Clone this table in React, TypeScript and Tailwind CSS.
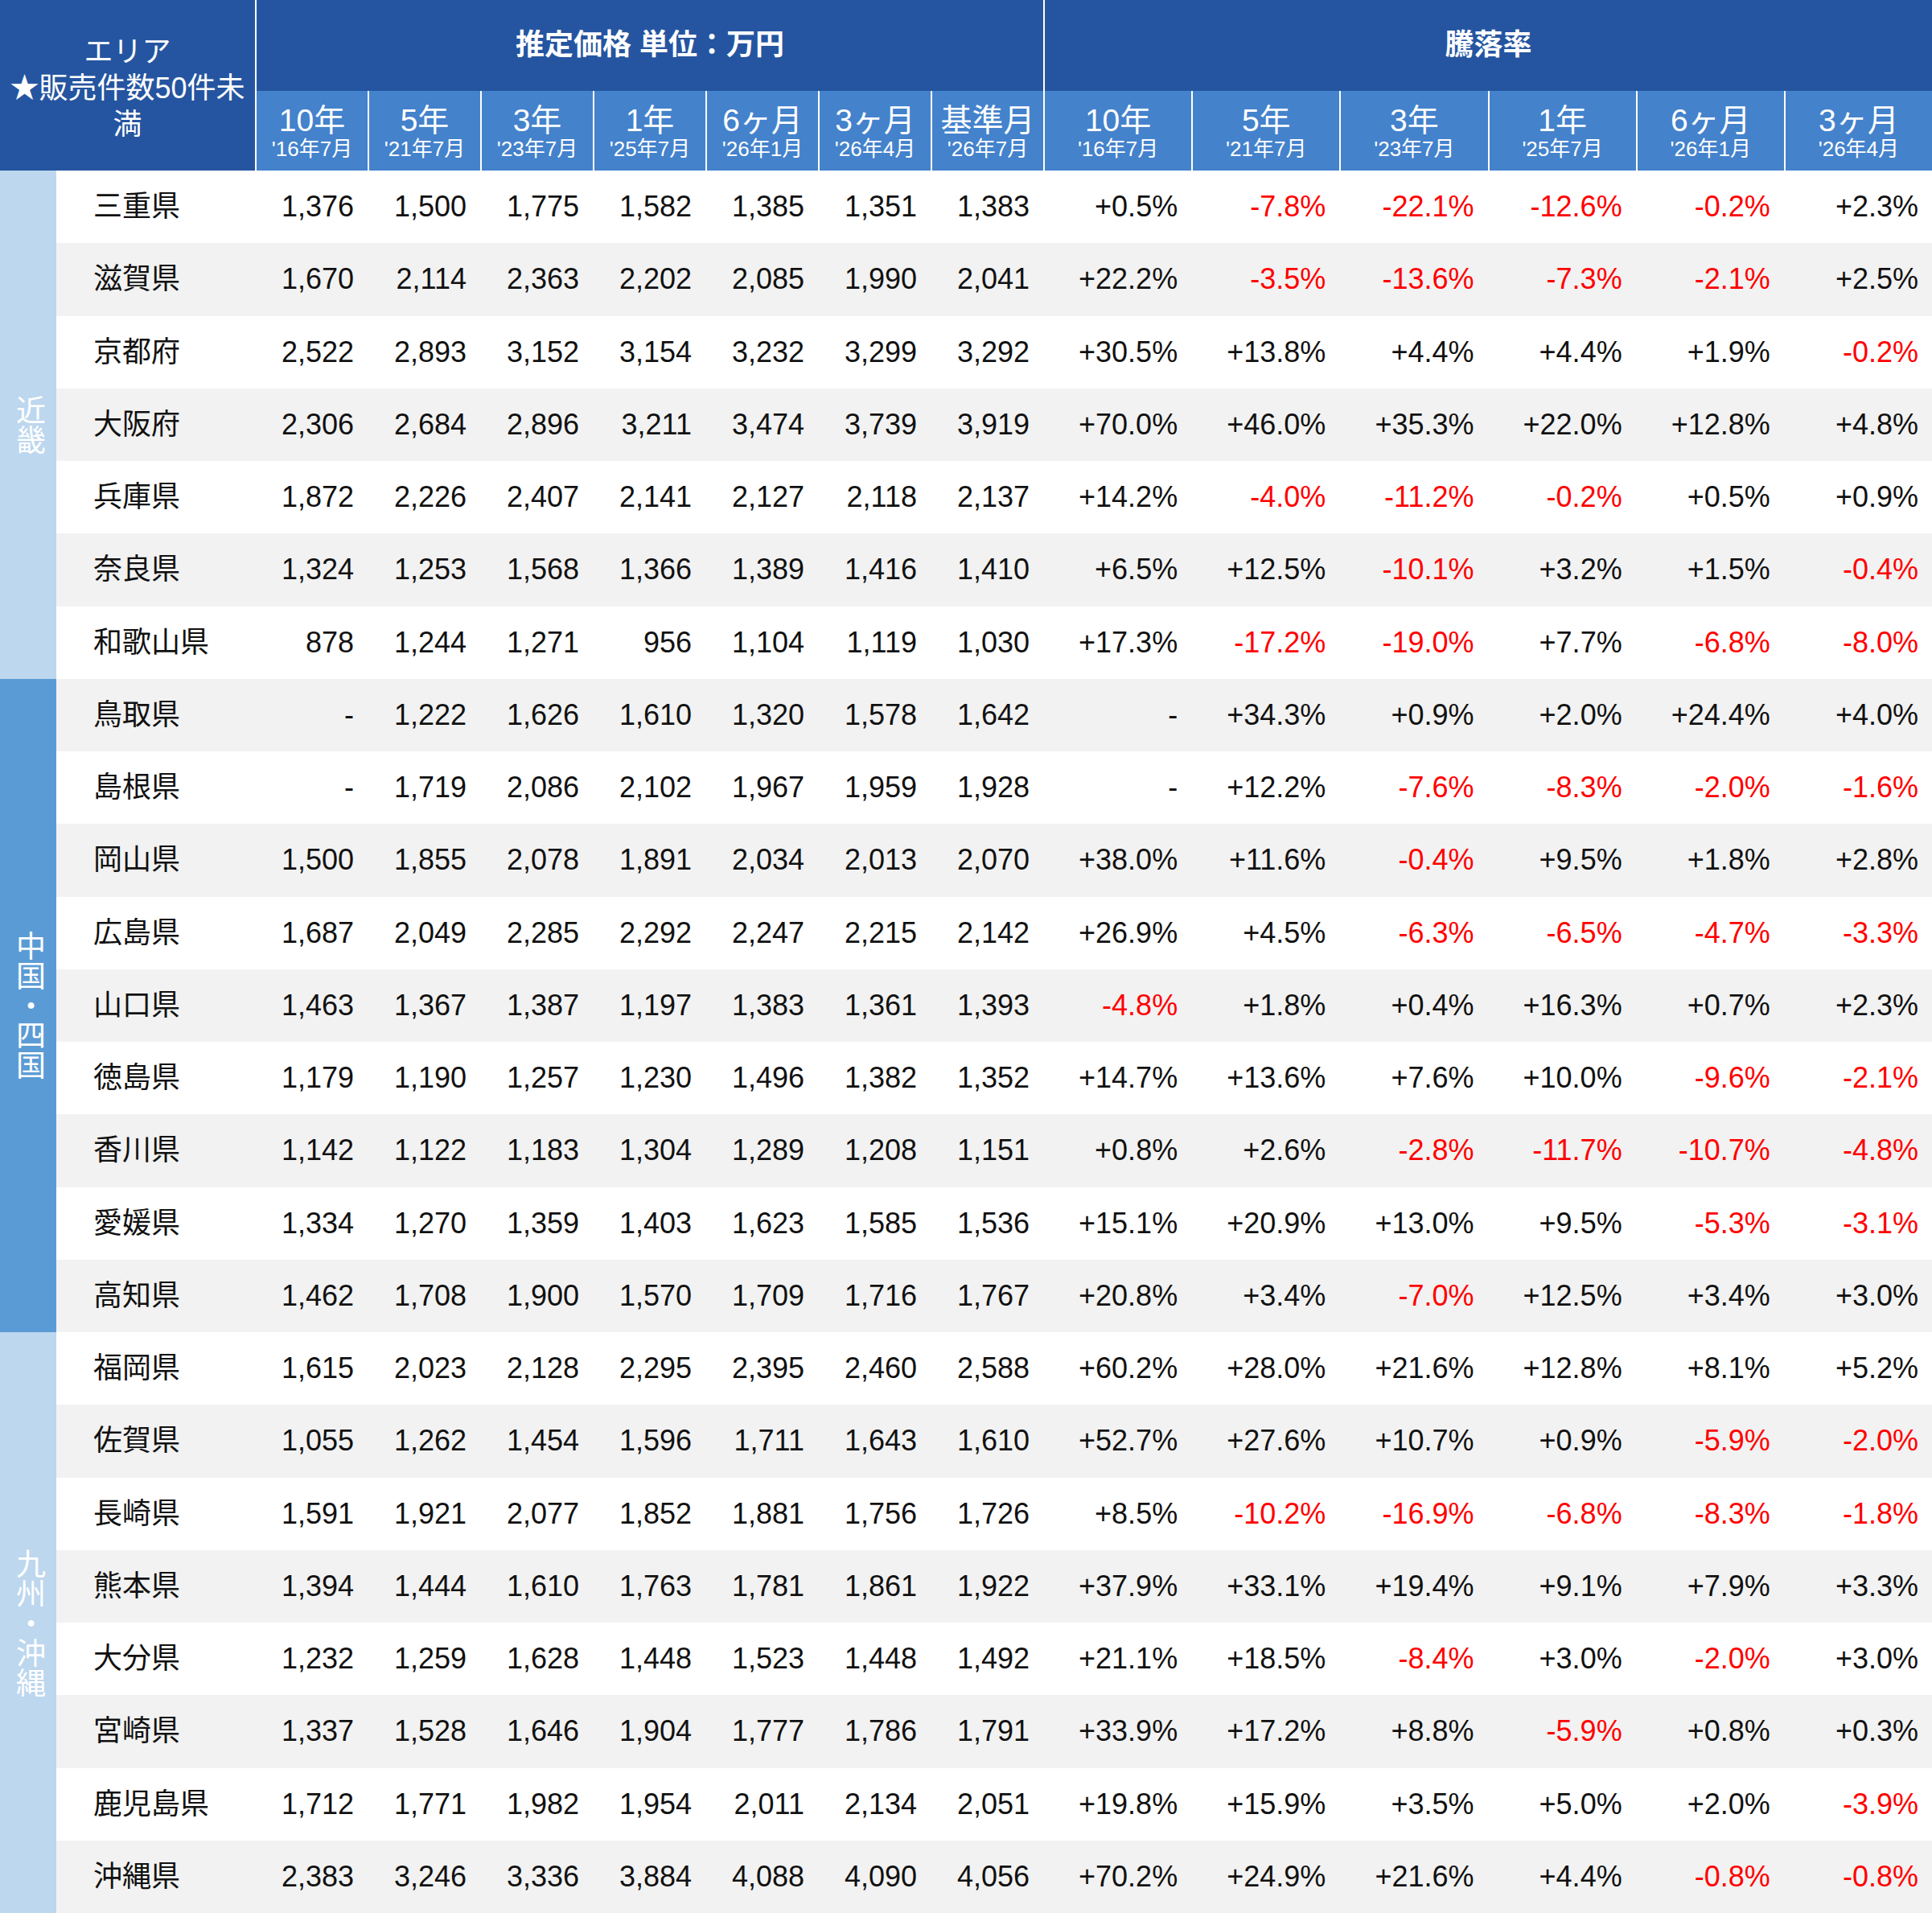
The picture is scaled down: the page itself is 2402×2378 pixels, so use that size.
import React from 'react';

type Row = { name: string; prices: string[]; changes: string[] };

const priceHeads = [
  ['10年', "'16年7月"],
  ['5年', "'21年7月"],
  ['3年', "'23年7月"],
  ['1年', "'25年7月"],
  ['6ヶ月', "'26年1月"],
  ['3ヶ月', "'26年4月"],
  ['基準月', "'26年7月"],
];

const changeHeads = priceHeads.slice(0, 6);

const parse = (line: string): Row => {
  const [name, ...rest] = line.trim().split(/\s+/);
  return { name, prices: rest.slice(0, 7), changes: rest.slice(7) };
};

const groups: { label: string; tone: string; rows: Row[] }[] = [
  {
    label: '近畿',
    tone: 'bg-[#bdd7ee]',
    rows: [
      '三重県 1,376 1,500 1,775 1,582 1,385 1,351 1,383 +0.5% -7.8% -22.1% -12.6% -0.2% +2.3%',
      '滋賀県 1,670 2,114 2,363 2,202 2,085 1,990 2,041 +22.2% -3.5% -13.6% -7.3% -2.1% +2.5%',
      '京都府 2,522 2,893 3,152 3,154 3,232 3,299 3,292 +30.5% +13.8% +4.4% +4.4% +1.9% -0.2%',
      '大阪府 2,306 2,684 2,896 3,211 3,474 3,739 3,919 +70.0% +46.0% +35.3% +22.0% +12.8% +4.8%',
      '兵庫県 1,872 2,226 2,407 2,141 2,127 2,118 2,137 +14.2% -4.0% -11.2% -0.2% +0.5% +0.9%',
      '奈良県 1,324 1,253 1,568 1,366 1,389 1,416 1,410 +6.5% +12.5% -10.1% +3.2% +1.5% -0.4%',
      '和歌山県 878 1,244 1,271 956 1,104 1,119 1,030 +17.3% -17.2% -19.0% +7.7% -6.8% -8.0%',
    ].map(parse),
  },
  {
    label: '中国・四国',
    tone: 'bg-[#5b9bd5]',
    rows: [
      '鳥取県 - 1,222 1,626 1,610 1,320 1,578 1,642 - +34.3% +0.9% +2.0% +24.4% +4.0%',
      '島根県 - 1,719 2,086 2,102 1,967 1,959 1,928 - +12.2% -7.6% -8.3% -2.0% -1.6%',
      '岡山県 1,500 1,855 2,078 1,891 2,034 2,013 2,070 +38.0% +11.6% -0.4% +9.5% +1.8% +2.8%',
      '広島県 1,687 2,049 2,285 2,292 2,247 2,215 2,142 +26.9% +4.5% -6.3% -6.5% -4.7% -3.3%',
      '山口県 1,463 1,367 1,387 1,197 1,383 1,361 1,393 -4.8% +1.8% +0.4% +16.3% +0.7% +2.3%',
      '徳島県 1,179 1,190 1,257 1,230 1,496 1,382 1,352 +14.7% +13.6% +7.6% +10.0% -9.6% -2.1%',
      '香川県 1,142 1,122 1,183 1,304 1,289 1,208 1,151 +0.8% +2.6% -2.8% -11.7% -10.7% -4.8%',
      '愛媛県 1,334 1,270 1,359 1,403 1,623 1,585 1,536 +15.1% +20.9% +13.0% +9.5% -5.3% -3.1%',
      '高知県 1,462 1,708 1,900 1,570 1,709 1,716 1,767 +20.8% +3.4% -7.0% +12.5% +3.4% +3.0%',
    ].map(parse),
  },
  {
    label: '九州・沖縄',
    tone: 'bg-[#bdd7ee]',
    rows: [
      '福岡県 1,615 2,023 2,128 2,295 2,395 2,460 2,588 +60.2% +28.0% +21.6% +12.8% +8.1% +5.2%',
      '佐賀県 1,055 1,262 1,454 1,596 1,711 1,643 1,610 +52.7% +27.6% +10.7% +0.9% -5.9% -2.0%',
      '長崎県 1,591 1,921 2,077 1,852 1,881 1,756 1,726 +8.5% -10.2% -16.9% -6.8% -8.3% -1.8%',
      '熊本県 1,394 1,444 1,610 1,763 1,781 1,861 1,922 +37.9% +33.1% +19.4% +9.1% +7.9% +3.3%',
      '大分県 1,232 1,259 1,628 1,448 1,523 1,448 1,492 +21.1% +18.5% -8.4% +3.0% -2.0% +3.0%',
      '宮崎県 1,337 1,528 1,646 1,904 1,777 1,786 1,791 +33.9% +17.2% +8.8% -5.9% +0.8% +0.3%',
      '鹿児島県 1,712 1,771 1,982 1,954 2,011 2,134 2,051 +19.8% +15.9% +3.5% +5.0% +2.0% -3.9%',
      '沖縄県 2,383 3,246 3,336 3,884 4,088 4,090 4,056 +70.2% +24.9% +21.6% +4.4% -0.8% -0.8%',
    ].map(parse),
  },
];

const spans: Record<number, string> = {
  7: 'row-span-7',
  8: 'row-span-8',
  9: 'row-span-9',
};

const SubHead = ({ top, sub }: { top: string; sub: string }) => (
  <div className="flex flex-col items-center justify-center border-l-2 border-white bg-[#4482cc] pt-[6px] text-white">
    <span className="text-[39px] leading-[40px]">{top}</span>
    <span className="text-[26px] leading-[31px]">{sub}</span>
  </div>
);

export default function App() {
  let idx = 0;
  return (
    <div className="w-[2402px] bg-white font-['Liberation_Sans','Noto_Sans_CJK_JP',sans-serif] text-[#111]">
      <div className="grid grid-cols-[70px_247px_repeat(7,140px)_repeat(6,1fr)] grid-rows-[113px_99px_repeat(24,90.25px)]">
        {/* header */}
        <div className="col-span-2 row-span-2 flex items-center justify-center bg-[#2555a0] pt-[6px] text-center text-[36px] leading-[45px] text-white">
          <div>
            エリア
            <br />
            ★販売件数50件未
            <br />満
          </div>
        </div>
        <div className="col-span-7 flex items-center justify-center border-l-2 border-white bg-[#2555a0] pb-[2px] text-[36px] font-bold text-white">
          推定価格 単位：万円
        </div>
        <div className="col-span-6 flex items-center justify-center border-l-2 border-white bg-[#2555a0] pb-[2px] text-[36px] font-bold text-white">
          騰落率
        </div>
        {priceHeads.map(([t, s]) => (
          <SubHead key={'p' + t} top={t} sub={s} />
        ))}
        {changeHeads.map(([t, s]) => (
          <SubHead key={'c' + t} top={t} sub={s} />
        ))}

        {/* body */}
        {groups.map((g) =>
          g.rows.map((r, ri) => {
            const bg = idx++ % 2 === 0 ? 'bg-white' : 'bg-[#f2f2f2]';
            return (
              <React.Fragment key={r.name}>
                {ri === 0 && (
                  <div className={`${spans[g.rows.length]} ${g.tone} flex items-center justify-center`}>
                    <span className="text-[37px] leading-none text-white [writing-mode:vertical-rl]">{g.label}</span>
                  </div>
                )}
                <div className={`${bg} flex items-center pl-[46px] text-[36px]`}>{r.name}</div>
                {r.prices.map((p, i) => (
                  <div key={'p' + i} className={`${bg} flex items-center justify-end pr-[17px] text-[36px]`}>
                    {p}
                  </div>
                ))}
                {r.changes.map((c, i) => (
                  <div
                    key={'c' + i}
                    className={`${bg} flex items-center justify-end pr-[17px] text-[36px] ${
                      c.startsWith('-') && c !== '-' ? 'text-[#ff0000]' : ''
                    }`}
                  >
                    {c}
                  </div>
                ))}
              </React.Fragment>
            );
          })
        )}
      </div>
    </div>
  );
}
